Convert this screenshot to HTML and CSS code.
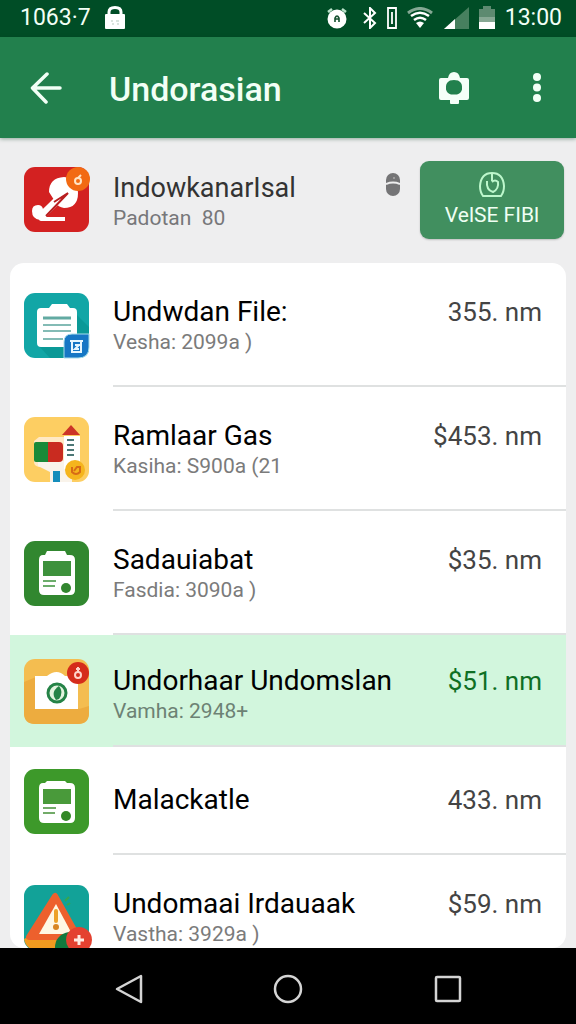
FILE: index.html
```
<!DOCTYPE html>
<html lang="id">
<head>
  <meta charset="UTF-8">
  <meta name="viewport" content="width=device-width, initial-scale=1.0">
  <title>Undorasian</title>
  <link rel="stylesheet" href="styles.css">
</head>
<body>
  <div class="status-bar">
    <span>1063·7</span>
    <svg class="lock" width="20" height="24" viewBox="0 0 20 24"><path d="M4 10V6q0-4.500 6-4.500T16 6v4" fill="none" stroke="#fff" stroke-width="3"/><rect y="8" width="20" height="15" rx="1" fill="#fff"/><path d="M6 15h2m3 0h3m-7 3h2m3 0h2" stroke="#b5c9bd"/></svg>
    <div class="status-icons">
      <svg class="alarm" width="20" height="22" viewBox="0 0 20 22"><path d="M1 5l4-3M19 5l-4-3" stroke="#b9e3ca" stroke-width="2.500"/><circle cx="10" cy="12" r="9.500" fill="#fff"/><path d="M8 15v-4q2-4 4 0v4M8 12h4" fill="none" stroke="#124f2d" stroke-width="1.600"/></svg>
      <svg width="14" height="22" viewBox="0 0 14 22"><path d="M1 6l11 10-5 5V1l5 5L1 16" fill="none" stroke="#fff" stroke-width="2"/></svg>
      <svg width="10" height="22" viewBox="0 0 10 22"><path d="M1 1h8v20H1zM5 5v12" fill="none" stroke="#fff" stroke-width="1.800"/></svg>
      <svg width="26" height="22" viewBox="0 0 26 22"><path d="M1 6Q13-3 25 6" fill="none" stroke="#85a894" stroke-width="3"/><path d="M4 9q9-6.500 18 0M7 13q6-4.500 12 0" fill="none" stroke="#fff" stroke-width="2.500"/><path d="M9 16q4-3 8 0l-4 5z" fill="#fff"/></svg>
      <svg width="26" height="22" viewBox="0 0 26 22"><path d="M26 0v22H1z" fill="#47805f"/><path d="M12 12v10H1z" fill="#fff"/></svg>
      <svg width="16" height="23" viewBox="0 0 16 23"><path d="M0 3h4V0h8v3h4v13H0z" fill="#5d8a70"/><path d="M0 11h16v5H0z" fill="#87a894"/><path d="M0 16h16v7H0z" fill="#fff"/></svg>
    </div>
    <span>13:00</span>
  </div>

  <header class="app-bar">
    <button class="icon-btn" aria-label="Kembali"><svg width="32" height="32" viewBox="0 0 32 32"><path d="M30 16H3M17 2L2.500 16 16 30" fill="none" stroke="#f2fff6" stroke-width="3.500" stroke-linecap="round" stroke-linejoin="round"/></svg></button>
    <h1>Undorasian</h1>
    <button class="icon-btn" aria-label="Kamera"><svg width="32" height="34" viewBox="0 0 32 34"><path fill-rule="evenodd" d="M3 7h7q1-6 6-6t6 6h7q2 0 2 2v18q0 2-2 2h-8v3q0 1-1 1h-7q-1 0-1-1v-3H3q-2 0-2-2V9q0-2 2-2zM12 9.500q-4 2-4 6v3q1 4 5 5h6q4-1 5-5v-3q0-4-4-6-4-1-8 0z" fill="#f5fff8"/></svg></button>
    <button class="icon-btn menu-btn" aria-label="Menu"><svg width="10" height="32" viewBox="0 0 10 32"><g fill="#f2fff6"><circle cx="5" cy="5" r="4"/><circle cx="5" cy="15.500" r="4"/><circle cx="5" cy="26" r="4"/></g></svg></button>
  </header>

  <main>
    <section class="summary">
      <svg class="app-icon" viewBox="0 0 65 65"><rect width="65" height="65" rx="11" fill="#d32121"/><path d="M25 25q0-14 15-15 14 1 14 16 0 15-14 15-6-1-8-5z" fill="#fff"/><path d="M31 33L17 47v5h24" fill="none" stroke="#fff" stroke-width="4" stroke-linejoin="round"/><path d="M8 44q0-6 6-6 4 0 5 4l12-11 5 5-15 15-5 2q-8-1-8-9z" fill="#fff"/><path d="M22 49l22-23-14 9" fill="none" stroke="#b81e20" stroke-width="2"/><circle cx="54" cy="12" r="12" fill="#f26a12"/><circle cx="54" cy="14" r="3" fill="none" stroke="#ffe4c4" stroke-width="2"/><path d="M54 11l3-3" stroke="#ffe4c4" stroke-width="2"/></svg>
      <div class="summary-text">
        <h2>IndowkanarIsal</h2>
        <p>Padotan &nbsp;80</p>
      </div>
      <svg class="mouse" width="14" height="23" viewBox="0 0 14 23"><rect width="14" height="23" rx="7" fill="#747476"/><path d="M0 11q7-3 14 0" fill="none" stroke="#ededee" stroke-width="2"/><circle cx="8" cy="5" r="1" fill="#aaa"/></svg>
      <button class="action-btn">
        <svg width="26" height="26" viewBox="0 0 26 26"><path d="M4 24q-3-4-3-10Q2 1 13 1t12 13q0 6-3 10z" fill="none" stroke="#bdf7cc" stroke-width="2"/><path d="M13 1v8M8 9q-1 9 6 11 6-3 5-10-3-3-6 0" fill="none" stroke="#bdf7cc" stroke-width="2"/></svg>
        <span>VelSE FIBl</span>
      </button>
    </section>

    <ul class="list">
      <li class="row">
        <svg class="app-icon" viewBox="0 0 65 65"><rect width="65" height="65" rx="11" fill="#12a6a6"/><path d="M46 15l19 19v20q0 11-11 11H26L14 52z" fill="#0b9997"/><path d="M17 15h8l3-4h15l3 4h3q4 0 4 4v31q0 4-4 4H17q-4 0-4-4V19q0-4 4-4z" fill="#fff"/><path d="M19 25h28" stroke="#62aaa2" stroke-width="3"/><path d="M19 32h28M19 38h28M19 46h20" stroke="#83bbb5" stroke-width="2"/><path d="M40 65V49q0-8 8-8h17v13q0 11-11 11z" fill="#1677c5" stroke="#a7ddea"/><path d="M46 48h13M48 48v11h9V48M51 52h4l-4 4h4" fill="none" stroke="#e6f7ff" stroke-width="2"/></svg>
        <div class="row-body">
          <div class="row-head"><h3>Undwdan File:</h3><span class="price">355. nm</span></div>
          <p>Vesha: 2099a )</p>
        </div>
      </li>
      <li class="row">
        <svg class="app-icon" viewBox="0 0 65 65"><rect width="65" height="65" rx="11" fill="#fdce62"/><path d="M15 20h26v30H15q-5-1-5-5V24z" fill="#ffe9c4"/><path d="M14 44h34v21H26V55l-12-6z" fill="#f9f3ea"/><path d="M40 19h16v33H40z" fill="#fff"/><path d="M38 18l9-10 9 10z" fill="#cc3427"/><path d="M43 23h7M43 28h7M43 33h7M43 38h7" stroke="#4d7776" stroke-width="2"/><rect x="10" y="25" width="20" height="20" rx="2" fill="#198a38"/><path d="M24 25h11q4 0 4 4v12q0 4-4 4H24z" fill="#c92b20"/><path d="M29 54h7v11h-7z" fill="#158dbb"/><circle cx="51" cy="53" r="10" fill="#f5b51d"/><path d="M48 50v5q4 4 8 0v-5h-3l-3 4" fill="none" stroke="#d76b16" stroke-width="2"/></svg>
        <div class="row-body">
          <div class="row-head"><h3>Ramlaar Gas</h3><span class="price">$453. nm</span></div>
          <p>Kasiha: S900a (21</p>
        </div>
      </li>
      <li class="row">
        <svg class="app-icon" viewBox="0 0 65 65"><rect width="65" height="65" rx="11" fill="#31872f"/><path d="M19 14h2l2-4h18l2 4h3q5 0 5 5v30q0 5-5 5H20q-5 0-5-5V19q0-5 4-5z" fill="#fff"/><path d="M19 20h28v15H19z" fill="#3d913c"/><path d="M19 40h13M19 45h12" stroke="#6cad6b" stroke-width="2"/><circle cx="42" cy="47" r="5" fill="#32862f"/></svg>
        <div class="row-body">
          <div class="row-head"><h3>Sadauiabat</h3><span class="price">$35. nm</span></div>
          <p>Fasdia: 3090a )</p>
        </div>
      </li>
      <li class="row row-compact row-active">
        <svg class="app-icon" viewBox="0 0 65 65"><rect width="65" height="65" rx="11" fill="#f4bd50"/><path d="M0 23l12-5 43 32 10-3v7q0 11-11 11H11Q0 65 0 54z" fill="#edac3f"/><path d="M11 17h12q10-8 18 0h13v33H11z" fill="#fff"/><circle cx="33" cy="34" r="9" fill="#e3f4df" stroke="#258347" stroke-width="3"/><path d="M32 41q-6-8 3-14 5 6 0 13z" fill="#258347"/><circle cx="54" cy="14" r="11" fill="#d52c1b"/><circle cx="54" cy="16" r="3" fill="none" stroke="#ffd4ca" stroke-width="2"/><path d="M54 13V8m-2 2h4" stroke="#ffd4ca" stroke-width="2"/></svg>
        <div class="row-body">
          <div class="row-head"><h3>Undorhaar Undomslan</h3><span class="price">$51. nm</span></div>
          <p>Vamha: 2948+</p>
        </div>
      </li>
      <li class="row row-compact">
        <svg class="app-icon" viewBox="0 0 65 65"><rect width="65" height="65" rx="11" fill="#3d992a"/><path d="M19 14h2l2-2h18l2 2h3q5 0 5 5v30q0 5-5 5H20q-5 0-5-5V19q0-5 4-5z" fill="#fff"/><path d="M19 20h28v15H19z" fill="#499a3a"/><path d="M19 39h13M19 44h12" stroke="#72ab68" stroke-width="2"/><circle cx="42" cy="47" r="5" fill="#338827"/></svg>
        <div class="row-body">
          <div class="row-head"><h3>Malackatle</h3><span class="price">433. nm</span></div>
        </div>
      </li>
      <li class="row">
        <svg class="app-icon" viewBox="0 0 65 65"><rect width="65" height="65" rx="11" fill="#12a298"/><path d="M2 53h46v12H11Q2 64 0 54z" fill="#f29a1f"/><path d="M31 11L5 52h49z" fill="#ed602d" stroke="#ed602d" stroke-width="6" stroke-linejoin="round"/><path d="M32 19L15 49h33z" fill="#fff7e4"/><path d="M32 26v10" stroke="#eda128" stroke-width="4" stroke-linecap="round"/><circle cx="32" cy="42" r="3" fill="#d88422"/><path d="M41 16l4-4M43 20l3-2" stroke="#36a64f" stroke-width="2"/><path d="M31 65q-1-15 14-18v18z" fill="#12793e"/><circle cx="55" cy="55" r="13" fill="#e44130"/><path d="M50 55h10M55 50v10" stroke="#ffebe3" stroke-width="3"/></svg>
        <div class="row-body">
          <div class="row-head"><h3>Undomaai Irdauaak</h3><span class="price">$59. nm</span></div>
          <p>Vastha: 3929a )</p>
        </div>
      </li>
    </ul>
  </main>

  <nav class="nav-bar">
    <button class="icon-btn" aria-label="Kembali"><svg width="30" height="30" viewBox="0 0 30 30"><path d="M28 2v26L4 15z" fill="none" stroke="#d4d4d4" stroke-width="2.500" stroke-linejoin="round"/></svg></button>
    <button class="icon-btn" aria-label="Beranda"><svg width="30" height="30" viewBox="0 0 30 30"><circle cx="15" cy="15" r="13" fill="none" stroke="#d4d4d4" stroke-width="2.500"/></svg></button>
    <button class="icon-btn" aria-label="Aplikasi terbaru"><svg width="30" height="30" viewBox="0 0 30 30"><rect x="3" y="3" width="24" height="24" rx="1" fill="none" stroke="#d4d4d4" stroke-width="2.500"/></svg></button>
  </nav>
</body>
</html>
```
FILE: styles.css
```
* { box-sizing: border-box; }
body { margin: 0; height: 100vh; display: flex; flex-direction: column; overflow: hidden; background: #eeeeef; color: #000; font-family: Roboto, sans-serif; }
h1, h2, h3, p, ul { margin: 0; padding: 0; font-weight: 400; }
svg { display: block; flex-shrink: 0; }
button { font-family: inherit; border: none; cursor: pointer; }

/* status bar */
.status-bar { display: flex; align-items: center; padding: 0 14px 2px 20px; height: 37px; flex-shrink: 0; background: #004d26; color: #f2fff6; font-size: 23px; }
.lock { margin-left: 14px; }
.status-icons { display: flex; align-items: center; gap: 10px; margin-left: auto; margin-right: 10px; }
.alarm { margin-right: 6px; }

/* app bar */
.app-bar { display: flex; align-items: center; height: 101px; flex-shrink: 0; padding: 0 34px 0 30px; background: #22804d; color: #f2fff6; box-shadow: 0 1px 4px rgba(0, 60, 30, 0.4); }
.app-bar h1 { flex: 1; margin-left: 47px; padding-top: 2px; font-size: 34px; font-weight: 500; }
.icon-btn { padding: 0; background: none; }
.menu-btn { margin-left: 62px; }

main { flex: 1; min-height: 0; display: flex; flex-direction: column; padding: 0 10px; }

/* summary */
.summary { display: flex; align-items: center; height: 125px; flex-shrink: 0; padding: 0 2px 2px 14px; }
.app-icon { width: 65px; height: 65px; align-self: center; overflow: visible; }
.summary-text { flex: 1; margin-left: 24px; padding-top: 4px; }
.summary h2 { font-size: 27px; line-height: 32px; color: #333; }
.summary p { font-size: 21px; line-height: 28px; color: #77777a; }
.mouse { margin: 0 20px 30px 0; }
.action-btn { display: flex; flex-direction: column; align-items: center; justify-content: center; gap: 4px; width: 144px; height: 78px; padding: 0; border-radius: 9px; background: #418f5f; color: #effff3; font-size: 21px; line-height: 26px; box-shadow: 0 1px 2px rgba(0, 0, 0, 0.2); }

/* list */
.list { flex: 1; min-height: 0; overflow: hidden; list-style: none; background: #fff; border-radius: 14px; }
.row { display: flex; height: 124px; padding-left: 14px; }
.row-compact { height: 108px; }
.row-body { flex: 1; display: flex; flex-direction: column; justify-content: center; margin-left: 24px; padding: 2px 24px 0 0; border-bottom: 2px solid #dfe1e1; }
.row-compact .row-body { padding-top: 0; }
.row-head { display: flex; align-items: center; justify-content: space-between; }
.row h3 { font-size: 28px; line-height: 34px; }
.row p { font-size: 21px; line-height: 26px; color: #7b7b7b; }
.price { font-size: 26px; color: #444; white-space: nowrap; }
.row-active { height: 112px; background: #d2f6dd; }
.row-active .row-body { padding-top: 8px; }
.row-active p { color: #6d8274; }
.row-active .price { color: #0f6f24; }

/* navigation bar */
.nav-bar { display: flex; align-items: center; justify-content: center; gap: 130px; height: 76px; flex-shrink: 0; padding-top: 5px; background: #000; }
```
